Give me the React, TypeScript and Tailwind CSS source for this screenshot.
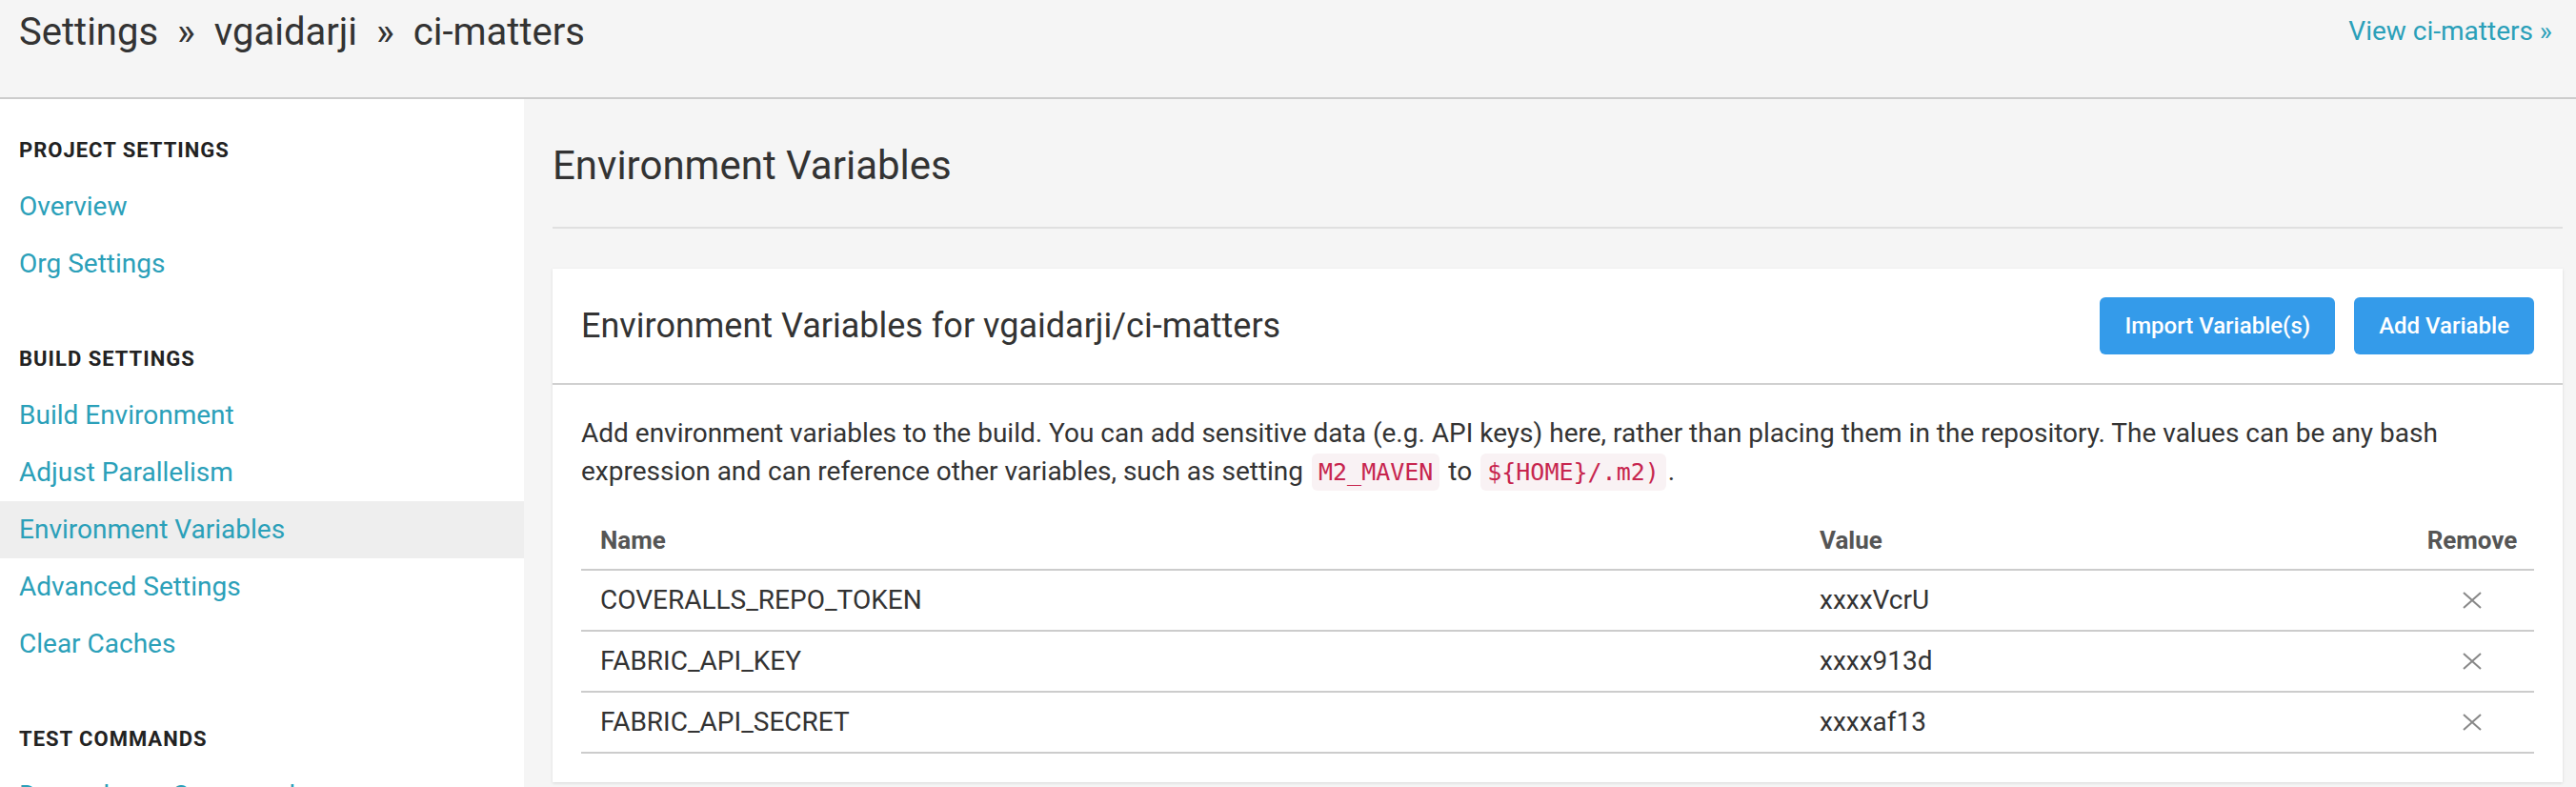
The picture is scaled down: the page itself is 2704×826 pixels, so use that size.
import React from 'react'

const sections = [
  { title: 'PROJECT SETTINGS', items: ['Overview', 'Org Settings'] },
  {
    title: 'BUILD SETTINGS',
    items: ['Build Environment', 'Adjust Parallelism', 'Environment Variables', 'Advanced Settings', 'Clear Caches'],
  },
  { title: 'TEST COMMANDS', items: ['Dependency Commands', 'Test Commands'] },
]

const vars = [
  { name: 'COVERALLS_REPO_TOKEN', value: 'xxxxVcrU' },
  { name: 'FABRIC_API_KEY', value: 'xxxx913d' },
  { name: 'FABRIC_API_SECRET', value: 'xxxxaf13' },
]

const RemoveIcon = () => (
  <svg width="22" height="18" viewBox="0 0 22 18" className="inline-block">
    <path d="M2 1 L20 17 M20 1 L2 17" stroke="#888" strokeWidth="2" fill="none" />
  </svg>
)

const Code: React.FC<{ children: React.ReactNode }> = ({ children }) => (
  <code className="font-['DejaVu_Sans_Mono',monospace] text-[25px] text-[#c7254e] bg-[#f9f2f4] rounded-[6px] px-[7px] py-[5px] mx-[2px]">
    {children}
  </code>
)

const App: React.FC = () => {
  return (
    <div className="min-h-screen h-[826px] overflow-hidden flex flex-col bg-[#f5f5f5] font-['Roboto',sans-serif] text-[#333]">
      <div className="h-[104px] shrink-0 flex justify-between items-start px-[20px] pt-[10px] border-b-2 border-[#cccccc] bg-[#f5f5f5]">
        <div className="text-[40px] leading-[48px] text-[#333]">
          Settings<span className="mx-[20px]">»</span>vgaidarji<span className="mx-[20px]">»</span>ci-matters
        </div>
        <a className="text-[28px] leading-[34px] mt-[6px] mr-[5px] text-[#2ba0b9]">View ci-matters »</a>
      </div>

      <div className="flex flex-1">
        <div className="w-[550px] shrink-0 bg-white pt-[39px]">
          {sections.map((s, i) => (
            <div key={s.title} className={i > 0 ? 'mt-[55px]' : ''}>
              <div className="px-[20px] text-[22px] leading-[30px] font-bold tracking-[1px] text-[#222] mb-[14px]">
                {s.title}
              </div>
              {s.items.map((item) => (
                <div
                  key={item}
                  className={
                    'px-[20px] h-[60px] leading-[60px] text-[28px] text-[#2ba0b9] ' +
                    (item === 'Environment Variables' ? 'bg-[#eeeeee]' : '')
                  }
                >
                  {item}
                </div>
              ))}
            </div>
          ))}
        </div>

        <div className="flex-1 pl-[30px] pr-[14px] pt-[45px]">
          <h1 className="text-[42px] leading-[50px] text-[#333] pb-[39px] border-b-2 border-[#e0e0e0]">
            Environment Variables
          </h1>

          <div className="mt-[42px] bg-white shadow-[0_1px_3px_rgba(0,0,0,0.12)]">
            <div className="flex items-center justify-between px-[30px] py-[30px] border-b-2 border-[#d0d0d0]">
              <div className="text-[36px] text-[#333]">Environment Variables for vgaidarji/ci-matters</div>
              <div className="flex gap-[20px]">
                <button className="h-[60px] px-[26px] rounded-[6px] bg-[#349bea] text-white text-[24px] font-medium">
                  Import Variable(s)
                </button>
                <button className="h-[60px] px-[26px] rounded-[6px] bg-[#349bea] text-white text-[24px] font-medium">
                  Add Variable
                </button>
              </div>
            </div>

            <div className="px-[30px] pt-[31px] pb-[30px]">
              <p className="text-[28px] leading-[40px] text-[#333]">
                Add environment variables to the build. You can add sensitive data (e.g. API keys) here, rather than
                placing them in the repository. The values can be any bash expression and can reference other
                variables, such as setting <Code>M2_MAVEN</Code> to <Code>{'${HOME}/.m2)'}</Code>.
              </p>

              <div className="mt-[20px]">
                <div className="grid grid-cols-[1fr_640px_130px] h-[63px] pt-[17px] border-b-2 border-[#cccccc] text-[26px] leading-[28px] font-bold text-[#555]">
                  <div className="px-[20px]">Name</div>
                  <div className="px-[20px]">Value</div>
                  <div className="text-center">Remove</div>
                </div>
                {vars.map((v) => (
                  <div
                    key={v.name}
                    className="grid grid-cols-[1fr_640px_130px] items-center h-[64px] border-b-2 border-[#cccccc] text-[28px] text-[#333]"
                  >
                    <div className="px-[20px]">{v.name}</div>
                    <div className="px-[20px]">{v.value}</div>
                    <div className="flex justify-center">
                      <RemoveIcon />
                    </div>
                  </div>
                ))}
              </div>
            </div>
          </div>
        </div>
      </div>
    </div>
  )
}

export default App
